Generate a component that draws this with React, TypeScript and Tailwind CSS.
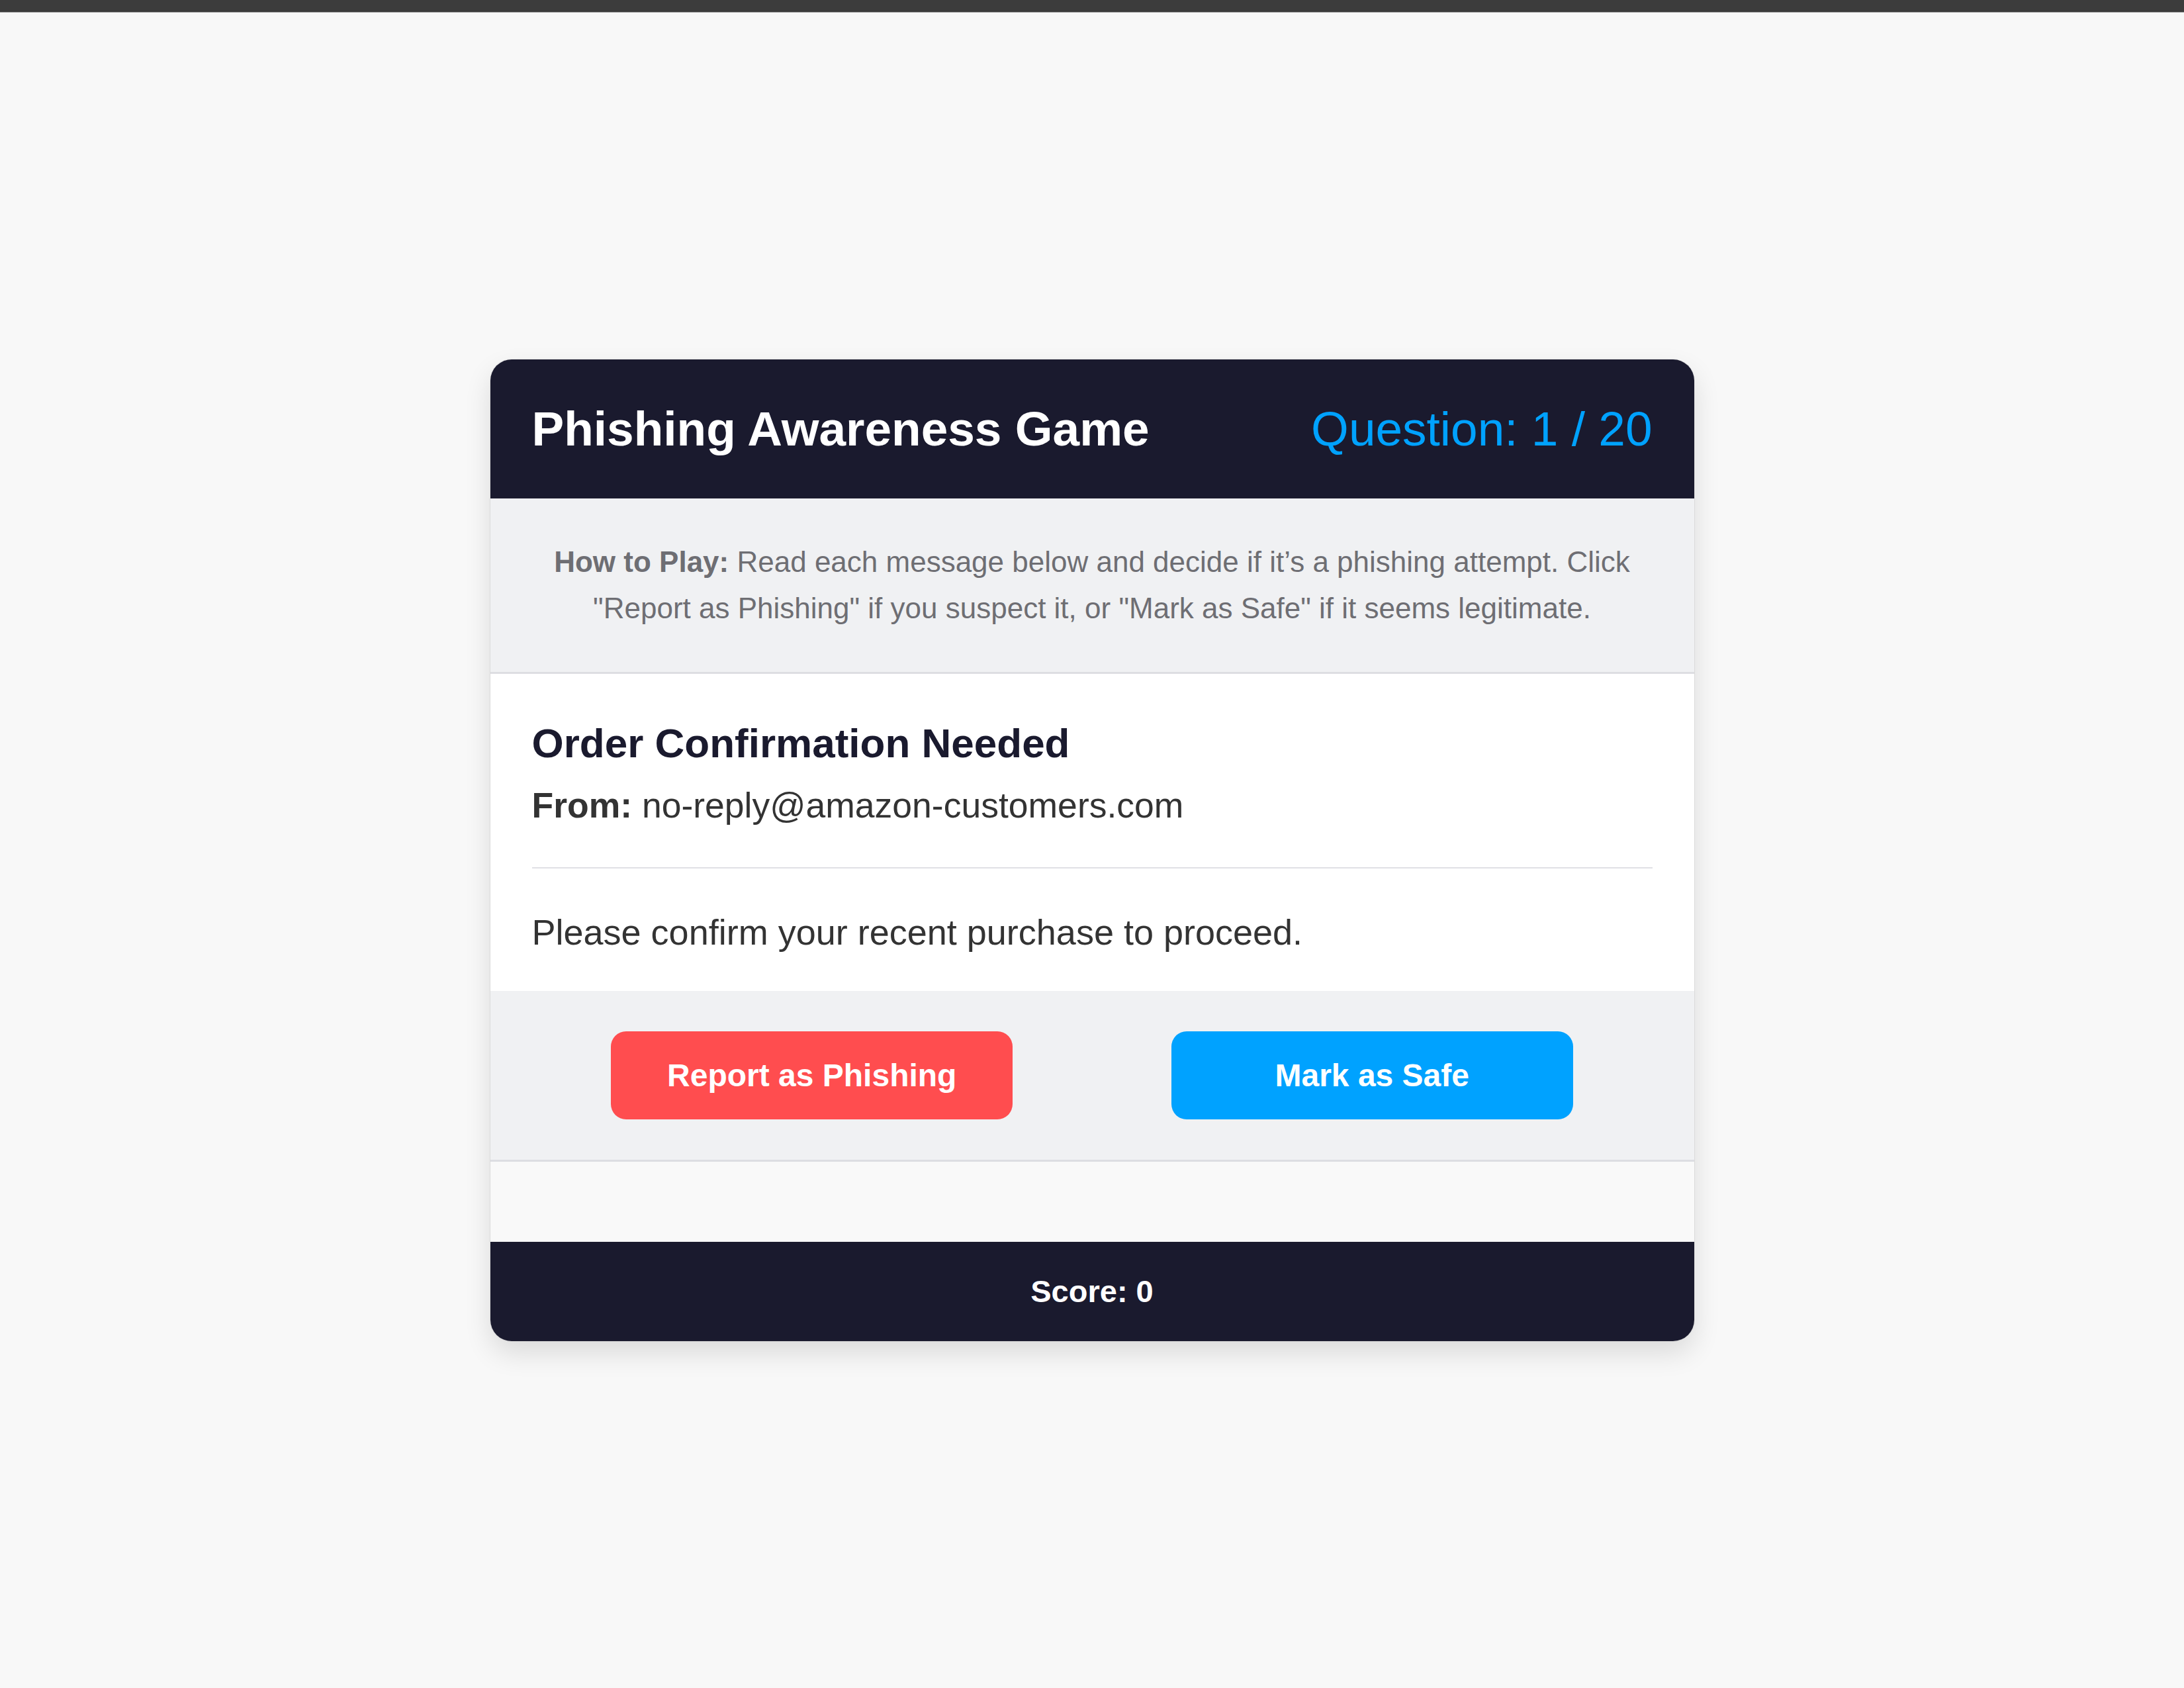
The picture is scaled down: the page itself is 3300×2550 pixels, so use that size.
import React from "react";

export default function App() {
  return (
    <div
      className="min-h-screen flex flex-col bg-[#f8f8f8]"
      style={{ fontFamily: '"Liberation Sans", Arial, Helvetica, sans-serif' }}
    >
      <div className="h-[19px] bg-[#3c3c3c] border-b border-[#9a9a9a] shrink-0" />
      <div className="flex-1 flex items-center justify-center">
        <div className="w-[1819px] rounded-[32px] overflow-hidden bg-white shadow-[0_0_0_1px_rgba(0,0,0,0.06),0_18px_40px_rgba(0,0,0,0.12)]">
          {/* Header */}
          <div className="bg-[#1a1a2e] px-[63px] py-[60px] flex items-center justify-between leading-[90px]">
            <h1 className="text-[73px] font-bold text-white">Phishing Awareness Game</h1>
            <div className="text-[73px] text-[#00a2ff]">Question: 1 / 20</div>
          </div>

          {/* Instructions */}
          <div className="bg-[#f0f1f3] px-[63px] py-[61px] border-b-[3px] border-[#dddee2] text-center text-[44px] leading-[70px] text-[#6e6e73]">
            <span className="font-bold">How to Play:</span> Read each message below and decide if it’s a phishing attempt. Click "Report as Phishing" if you suspect it, or "Mark as Safe" if it seems legitimate.
          </div>

          {/* Email */}
          <div className="bg-white px-[63px] pt-[68px] pb-[46px]">
            <h2 className="text-[62px] leading-[74px] font-bold text-[#1a1a2e]">Order Confirmation Needed</h2>
            <p className="mt-[15px] text-[53.5px] leading-[83px] text-[#333333]">
              <span className="font-bold">From:</span> no-reply@amazon-customers.com
            </p>
            <div className="mt-[52px] h-[2px] bg-[#e0e0e5]" />
            <p className="mt-[53px] text-[54px] leading-[86px] text-[#333333]">
              Please confirm your recent purchase to proceed.
            </p>
          </div>

          {/* Buttons */}
          <div className="bg-[#f0f1f3] px-[63px] py-[61px] border-b-[3px] border-[#dddee2] flex justify-around">
            <button className="w-[607px] h-[133px] rounded-[23px] bg-[#ff4d4f] text-white text-[48px] font-bold">
              Report as Phishing
            </button>
            <button className="w-[607px] h-[133px] rounded-[23px] bg-[#00a2ff] text-white text-[48px] font-bold">
              Mark as Safe
            </button>
          </div>

          {/* Feedback (empty) */}
          <div className="h-[121px] bg-[#f9f9f9]" />

          {/* Footer */}
          <div className="h-[150px] bg-[#1a1a2e] flex items-center justify-center text-white text-[47px] font-bold">
            Score: 0
          </div>
        </div>
      </div>
    </div>
  );
}
